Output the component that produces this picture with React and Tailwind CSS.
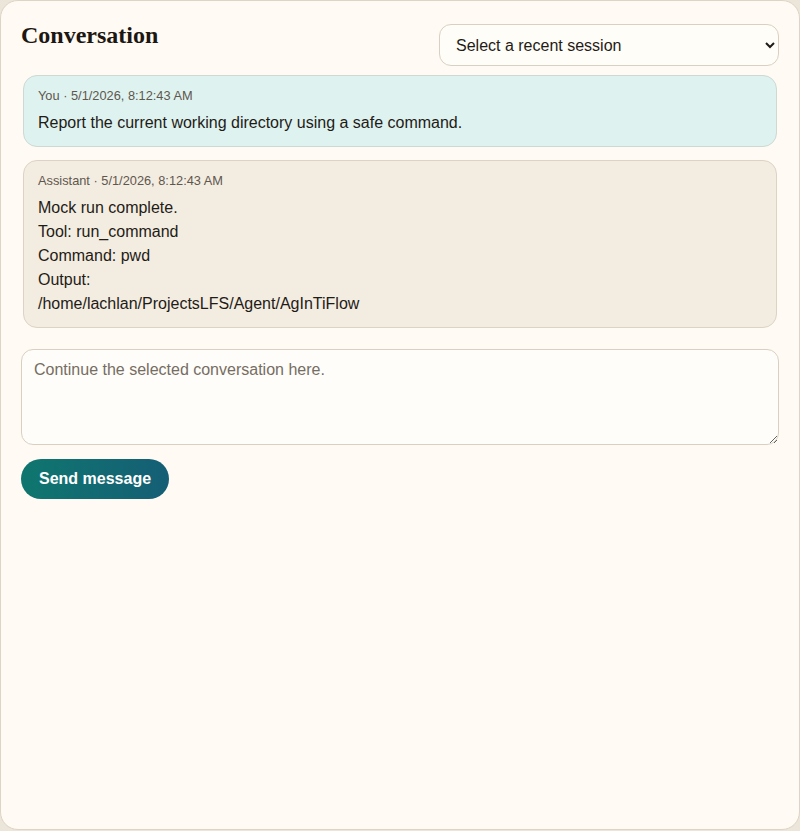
import React, { useState } from 'react';

const messages = [
  {
    id: 1,
    role: 'You',
    time: '5/1/2026, 8:12:43 AM',
    lines: ['Report the current working directory using a safe command.'],
  },
  {
    id: 2,
    role: 'Assistant',
    time: '5/1/2026, 8:12:43 AM',
    lines: [
      'Mock run complete.',
      'Tool: run_command',
      'Command: pwd',
      'Output:',
      '/home/lachlan/ProjectsLFS/Agent/AgInTiFlow',
    ],
  },
];

const App = () => {
  const [draft, setDraft] = useState('');
  const [session, setSession] = useState('');

  return (
    <div className="h-[831px] bg-[#ece5d9] font-['Liberation_Sans',Arial,sans-serif] text-[#1f1b16]">
      <div className="h-[830px] bg-[#fffaf3] border border-[#ddd4c5] rounded-[18px] px-5 pt-5">
        <div className="flex justify-between items-start">
          <h2 className="font-['Liberation_Serif','Times_New_Roman',serif] font-bold text-[24px] leading-[1.2] text-[#1c1712]">
            Conversation
          </h2>
          <select
            value={session}
            onChange={(e) => setSession(e.target.value)}
            className="mt-[3px] w-[340px] h-[42px] rounded-[12px] border border-[#d9d0c1] bg-[#fffdf8] pl-3 pr-2 text-[16px] text-[#1f1b16]"
          >
            <option value="">Select a recent session</option>
          </select>
        </div>

        <div className="mt-[9px] px-[2px] flex flex-col gap-[13px]">
          {messages.map((m) => (
            <div
              key={m.id}
              className={
                m.role === 'You'
                  ? 'rounded-[14px] border border-[#cdd9d2] bg-[#def2f0] px-[14px] pt-[11px] pb-[11px]'
                  : 'rounded-[14px] border border-[#dcd3c4] bg-[#f3ece1] px-[14px] pt-[11px] pb-[11px]'
              }
            >
              <div className="text-[12.8px] leading-[17px] text-[#5f574d]">
                {m.role} · {m.time}
              </div>
              <div className="mt-[7px] text-[16px] leading-6 text-[#1f1b16]">
                {m.lines.map((line) => (
                  <div key={line}>{line}</div>
                ))}
              </div>
            </div>
          ))}
        </div>

        <textarea
          value={draft}
          onChange={(e) => setDraft(e.target.value)}
          placeholder="Continue the selected conversation here."
          className="mt-[21px] block w-full h-[96px] rounded-[12px] border border-[#d9d0c1] bg-[#fffdf9] px-3 py-2 text-[16px] text-[#1f1b16] placeholder:text-[#756d63]"
        />

        <button className="mt-[14px] h-[40px] px-[18px] rounded-full bg-linear-to-r from-[#0f766e] to-[#155e75] text-white font-bold text-[16px]">
          Send message
        </button>
      </div>
    </div>
  );
};

export default App;
